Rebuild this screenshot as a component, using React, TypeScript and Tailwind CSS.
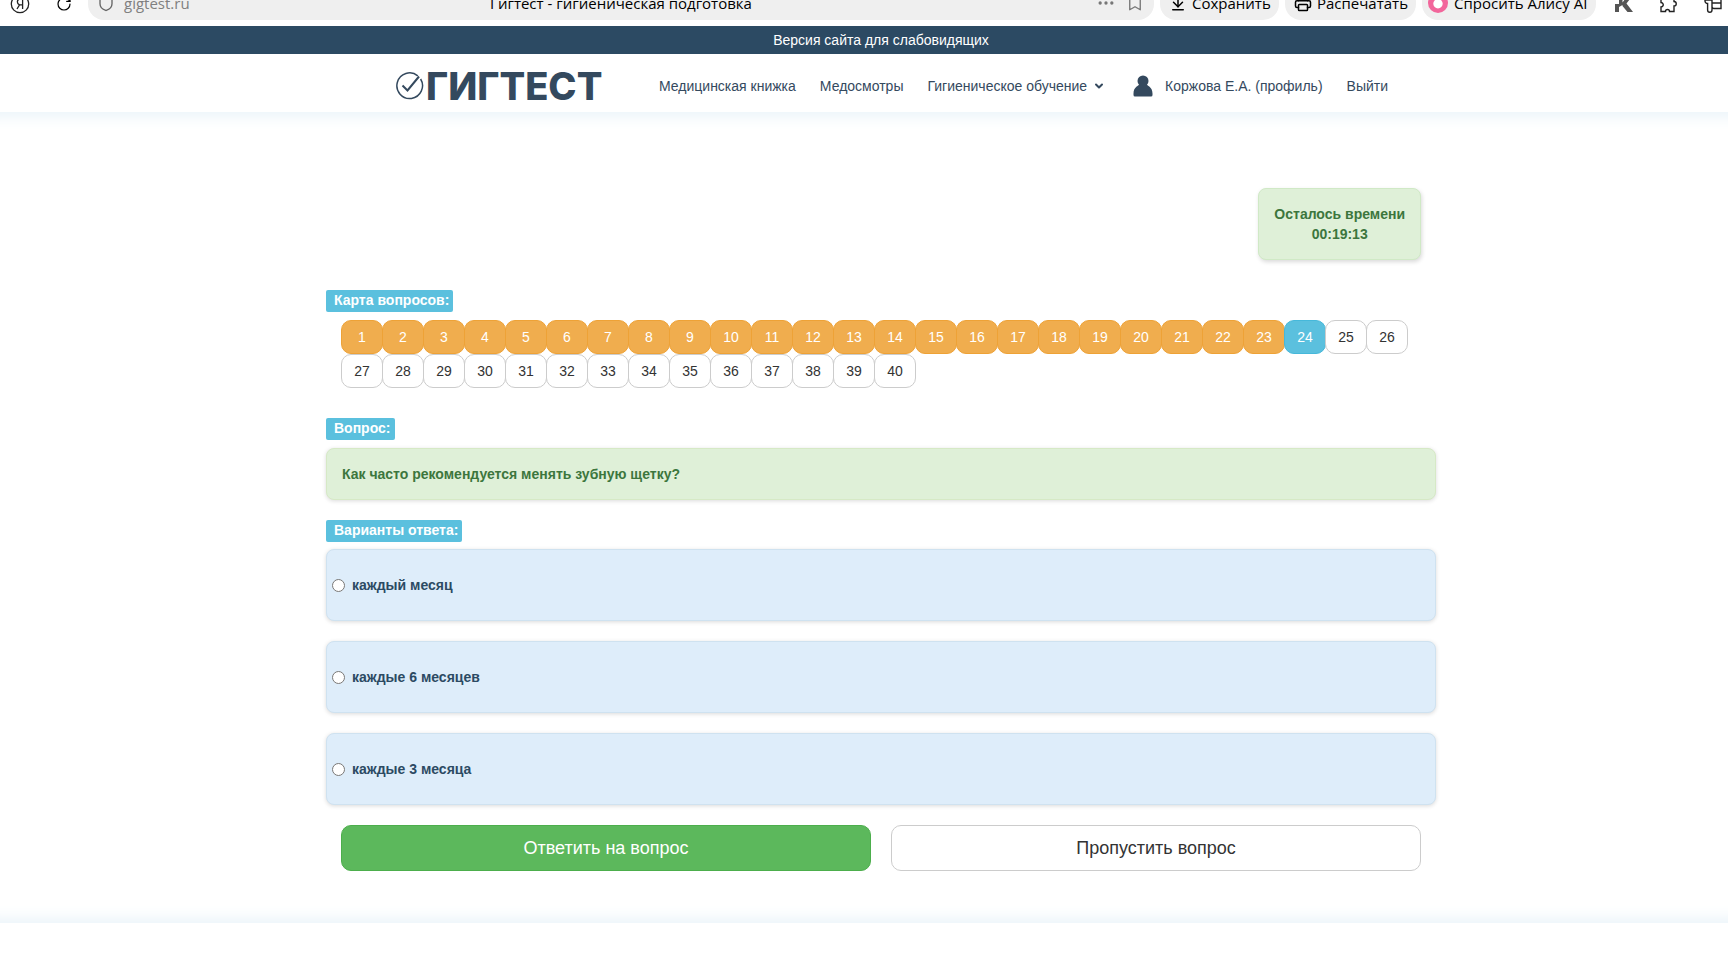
import React, { useState } from 'react';
import { ArrowDownToLine, Bookmark, ChevronDown, Ellipsis, Printer, RotateCw, Shield } from 'lucide-react';

const TOTAL_QUESTIONS = 40;
const CURRENT_QUESTION = 24;

const NAV_LINKS = ['Медицинская книжка', 'Медосмотры'];

const ANSWERS = [
  { id: 'a1', text: 'каждый месяц' },
  { id: 'a2', text: 'каждые 6 месяцев' },
  { id: 'a3', text: 'каждые 3 месяца' },
];

const pill = 'flex h-[34px] shrink-0 items-center rounded-2xl bg-[#efefef]';

const BrowserBar = () => (
  <div className="flex h-[26px] items-end overflow-hidden bg-white pb-[6px] font-['Open_Sans','Noto_Sans',sans-serif] text-[15px] leading-5 text-black">
    <div className="flex h-8 w-[88px] shrink-0 items-center">
      <button aria-label="Яндекс" className="ml-[10px] w-5">
        <svg viewBox="0 0 20 20" className="size-5" fill="none" stroke="#222" strokeWidth="1.3">
          <circle cx="10" cy="10" r="8.7" />
          <path d="M12.6 15V5h-1.8C8.600 5 7.400 6.200 7.400 7.900c0 1.400.8 2.200 2.100 3L7 15M9.500 10.900h3" />
        </svg>
      </button>
      <button aria-label="Обновить" className="ml-[26px]">
        <RotateCw size={16} strokeWidth={1.8} />
      </button>
    </div>

    <div className={`${pill} mr-[6px] min-w-0 flex-1 pr-[10px] pl-[9px]`}>
      <Shield size={18} strokeWidth={1.8} className="shrink-0 text-[#666]" />
      <span className="ml-[9px] w-[116px] text-[#808080]">gigtest.ru</span>
      <span className="flex-1 text-center">Гигтест - гигиеническая подготовка</span>
      <span className="flex w-[142px] items-center justify-end gap-[10px] text-[#777]">
        <Ellipsis size={20} />
        <Bookmark size={18} strokeWidth={1.8} />
      </span>
    </div>

    <button className={`${pill} mr-[6px] w-[119px] gap-[5px] pl-[9px]`}>
      <ArrowDownToLine size={18} strokeWidth={2} />
      Сохранить
    </button>
    <button className={`${pill} mr-[6px] w-[131px] gap-[5px] pl-[9px]`}>
      <Printer size={18} strokeWidth={2} />
      Распечатать
    </button>
    <button className={`${pill} w-[174px] gap-[6px] pl-[6px]`}>
      <svg viewBox="0 0 20 20" className="size-5">
        <circle cx="10" cy="10" r="10" fill="#f2669b" />
        <path d="M10 3.500c2 2.500 4.700 4.500 4.700 7.300a4.700 4.700 0 0 1-9.400 0C5.300 8 8 6 10 3.500z" fill="#fff" />
      </svg>
      Спросить Алису AI
    </button>

    <div className="flex h-8 w-[132px] shrink-0 items-center">
      <svg viewBox="0 0 20 20" className="ml-[18px] size-5 shrink-0" fill="#555">
        <path d="M1 10h4v8H1zM5 1h3.500v7.500L14 1h5l-6.500 8.500L19 18h-5.500l-5-6v-1L5 13z" />
      </svg>
      <svg viewBox="0 0 20 20" className="ml-[24px] size-5 shrink-0" fill="none" stroke="#222" strokeWidth="1.400">
        <path d="M3 3h4a2 2 0 1 1 4 0h5v4.500a2 2 0 1 1 0 4.500v5.500h-4.500a2 2 0 1 0-4 0H3V13a2 2 0 1 0 0-4.500z" />
      </svg>
      <svg viewBox="0 0 20 20" className="ml-[26px] size-5 shrink-0" fill="none" stroke="#222" strokeWidth="1.400">
        <path d="M1 6h7v10a2.200 2.200 0 0 1-4.400 0V9.500A2.500 2.500 0 0 1 1 7zM8 9h9V4M17 9v5.500H10A2 2 0 0 1 8 12.500" />
      </svg>
    </div>
  </div>
);

const Logo = () => (
  <a href="#" className="flex items-center text-[#34495e]">
    <svg viewBox="0 0 28 28" className="size-7" fill="none" stroke="currentColor">
      <path d="M21.800 3.800A12.800 12.800 0 1 0 24.600 7" strokeWidth="1.500" />
      <path d="M6.500 13.500l5 5L23 4.500" strokeWidth="2" />
    </svg>
    <span className="ml-[2px] font-['Inter',sans-serif] text-[38px] leading-10 font-extrabold">ГИГТЕСТ</span>
  </a>
);

const Header = () => (
  <header className="flex h-[58px] items-center bg-white pt-[6px] pl-[396px] text-sm whitespace-nowrap text-[#34495e]">
    <Logo />
    <nav className="ml-auto flex items-center gap-6 pr-[340px]">
      {NAV_LINKS.map((label) => (
        <a key={label} href="#">{label}</a>
      ))}
      <button className="flex items-center gap-[6px]">
        Гигиеническое обучение
        <ChevronDown size={12} strokeWidth={4} />
      </button>
      <a href="#" className="ml-1 flex items-center gap-3">
        <svg viewBox="0 0 20 22" className="h-[22px] w-5" fill="currentColor">
          <circle cx="10" cy="6" r="5.500" />
          <path d="M6.500 9h7c.3 1.800 6 2.500 6 9.500V20a1.500 1.500 0 0 1-1.500 1.500H2A1.500 1.500 0 0 1 .5 20v-1.500C.5 11.500 6.200 10.800 6.500 9z" />
        </svg>
        Коржова Е.А. (профиль)
      </a>
      <a href="#">Выйти</a>
    </nav>
  </header>
);

const SectionLabel = ({ children }: { children: React.ReactNode }) => (
  <h2 className="w-fit rounded-xs bg-[#5bc0de] pr-1 pb-[2px] pl-2 text-sm leading-5 font-bold text-white">{children}</h2>
);

const questionClass = (n: number) => {
  if (n < CURRENT_QUESTION) return 'border-[#eea236] bg-[#f0ad4e] text-white';
  if (n === CURRENT_QUESTION) return 'border-[#46b8da] bg-[#5bc0de] text-white';
  return 'border-[#ccc] bg-white text-[#333]';
};

const QuestionMap = () => (
  <div className="mt-2 flex flex-wrap pr-[15px] pl-4">
    {Array.from({ length: TOTAL_QUESTIONS }, (_, i) => i + 1).map((n) => (
      <button
        key={n}
        className={`-ml-px h-[34px] w-[42px] rounded-[10px] border text-sm ${questionClass(n)}`}
      >
        {n}
      </button>
    ))}
  </div>
);

export default function App() {
  const [answer, setAnswer] = useState('');

  return (
    <div className="min-h-screen overflow-hidden bg-white font-['Liberation_Sans',Arial,sans-serif] text-sm text-[#333]">
      <BrowserBar />
      <a href="#" className="block h-7 bg-[#2c4a63] pl-[34px] text-center leading-7 text-white">
        Версия сайта для слабовидящих
      </a>
      <Header />

      <main className="pt-[76px] pr-[292px] pb-[52px] pl-[326px] shadow-[inset_0_20px_14px_-14px_#edf5fa,inset_0_-20px_14px_-14px_#edf5fa]">
        <div className="mr-[15px] ml-auto w-fit rounded-lg border border-[#d0e9c6] bg-[#dff0d8] px-[15px] py-[15px] text-center leading-5 font-bold text-[#3c763d] shadow-[1px_2px_4px_rgba(0,0,0,0.15)]">
          <p>Осталось времени</p>
          <p>00:19:13</p>
        </div>

        <div className="mt-[30px]">
          <SectionLabel>Карта вопросов:</SectionLabel>
          <QuestionMap />
        </div>

        <div className="mt-[30px]">
          <SectionLabel>Вопрос:</SectionLabel>
          <p className="mt-2 rounded-lg border border-[#d6e9c6] bg-[#dff0d8] px-[15px] py-[15px] leading-5 font-bold text-[#3c763d] shadow-[0_1px_4px_rgba(0,0,0,0.15)]">
            Как часто рекомендуется менять зубную щетку?
          </p>
        </div>

        <div className="mt-5">
          <SectionLabel>Варианты ответа:</SectionLabel>
          <div className="mt-[7px] flex flex-col gap-5">
            {ANSWERS.map(({ id, text }) => (
              <label
                key={id}
                htmlFor={id}
                className="flex h-[72px] items-center gap-[7px] rounded-lg border border-[#cfe2f0] bg-[#deedfa] pl-[5px] font-bold text-[#2c4a63] shadow-[0_1px_4px_rgba(0,0,0,0.15)]"
              >
                <input
                  id={id}
                  type="radio"
                  name="answer"
                  checked={answer === id}
                  onChange={() => setAnswer(id)}
                  className="size-[13px]"
                />
                {text}
              </label>
            ))}
          </div>
        </div>

        <div className="mt-5 grid grid-cols-2 gap-5 px-[15px] text-lg">
          <button className="h-[46px] rounded-[10px] border border-[#4cae4c] bg-[#5cb85c] text-white">
            Ответить на вопрос
          </button>
          <button className="h-[46px] rounded-[10px] border border-[#ccc] bg-white text-[#333]">
            Пропустить вопрос
          </button>
        </div>
      </main>
    </div>
  );
}
